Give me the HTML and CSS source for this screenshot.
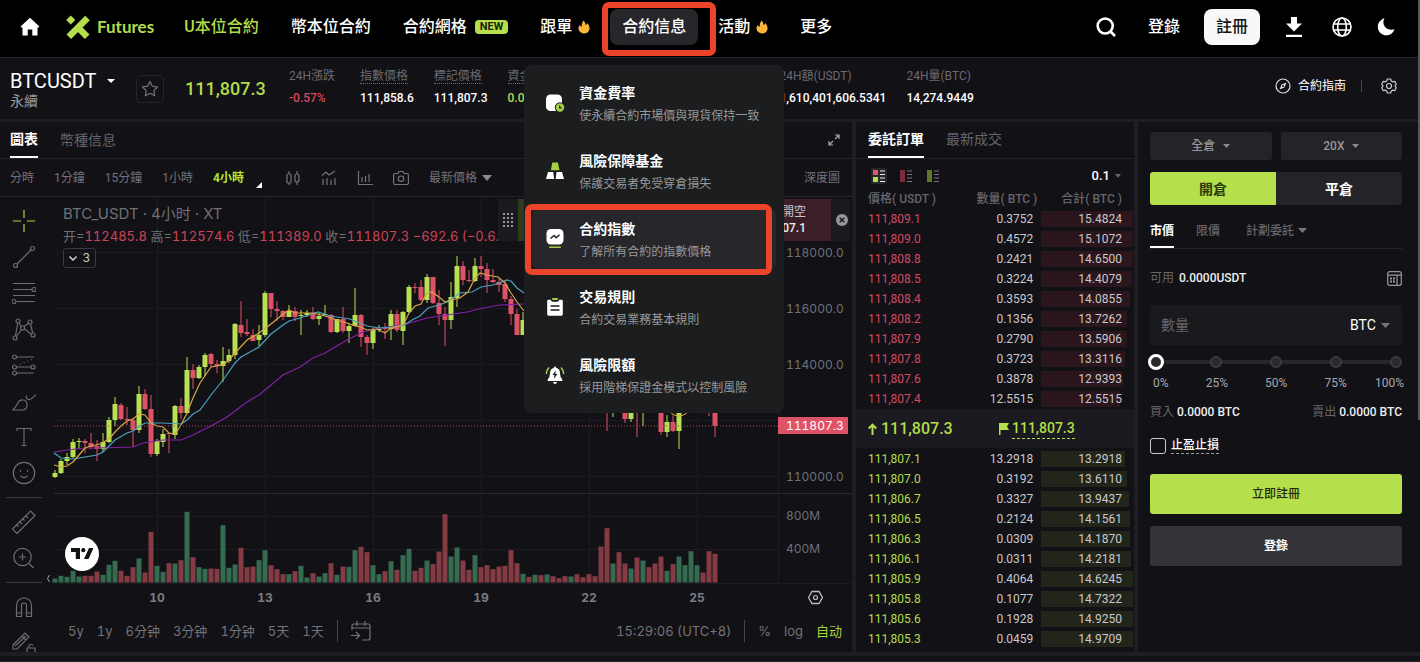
FILE: index.html
```html
<!DOCTYPE html>
<html lang="zh-Hant">
<head>
    <meta charset="UTF-8">
    <meta name="viewport" content="width=device-width, initial-scale=1.0">
    <title>BTCUSDT 永續 | Futures</title>
    <link rel="stylesheet" href="styles.css">
</head>
<body>

<header class="topbar">
    <a href="#" class="home" aria-label="Home">
        <svg width="20" height="20" viewBox="0 0 20 20"><path fill="#fff" d="M10 .8 19.4 9.400 18.600 10.500H17.500V18.500H12.300V12.500H7.700V18.500H2.500V10.500H1.400L.6 9.400Z"/></svg>
    </a>
    <a href="#" class="logo">
        <svg width="24" height="24" viewBox="0 0 24 24" fill="none" stroke="#b5e04c" stroke-width="6.500" stroke-linejoin="round"><path d="M21.500 3 2.800 21.700M2.500 2.800 7 7.300M11.500 12l9.700 9.700"/></svg>
        <span>Futures</span>
    </a>
    <nav>
        <a href="#" class="lime">U本位合約</a>
        <a href="#">幣本位合約</a>
        <a href="#">合約網格<span class="new">NEW</span></a>
        <a href="#">跟單<svg class="flame" width="12" height="14" viewBox="0 0 12 14"><path fill="#fbb53c" d="M5.500.5C6.800 2 7.600 3.200 7.500 5 8.500 4.700 9 4 9.200 3 11.500 5.500 12.300 8.500 10.800 11 9.500 13.200 7 13.600 5.500 13.400 2.500 13 .5 11 .5 8.500.5 7 1 5.800 1.800 5 2.200 6 2.800 6.700 3.600 7 3.600 4.500 4.200 2.300 5.500.5Z"/></svg></a>
        <div class="nav-item">
            <a href="#" class="current">合約信息</a>
            <div class="mark mark-nav"></div>
            <div class="menu">
                <a href="#">
                    <svg width="20" height="20" viewBox="0 0 20 20"><rect x="1" y="1.500" width="16" height="16.500" rx="4.500" fill="#fff"/><circle cx="15" cy="14.500" r="5.200" fill="#1b1d1f"/><circle cx="15" cy="14.500" r="4.200" fill="#a6cf45"/><path d="M14.700 12.500v2.300h2" stroke="#1b1d1f" stroke-width="1.200" fill="none"/></svg>
                    <span><b>資金費率</b><small>使永續合約市場價與現貨保持一致</small></span>
                </a>
                <a href="#">
                    <svg width="20" height="20" viewBox="0 0 20 20"><path fill="#a6cf45" d="M7.300 1.500h5.600l1.600 7.700H5.800Z"/><path fill="#fff" d="M3 11h5.200l1 7H1ZM11.500 11h5.500l2 7h-8.300Z"/></svg>
                    <span><b>風險保障基金</b><small>保護交易者免受穿倉損失</small></span>
                </a>
                <a href="#" class="on">
                    <svg width="20" height="20" viewBox="0 0 20 20"><rect x="1.500" y="0" width="17" height="15.500" rx="4.500" fill="#fff"/><path d="M5.500 9.500 9 6.500l2.200 2.200 3.300-3" stroke="#222" stroke-width="1.500" fill="none"/><rect x="4" y="17.500" width="12" height="1.500" rx=".7" fill="#a6cf45"/></svg>
                    <span><b>合約指數</b><small>了解所有合約的指數價格</small></span>
                    <i class="mark mark-menu"></i>
                </a>
                <a href="#">
                    <svg width="20" height="20" viewBox="0 0 20 20"><rect x="7" y="1" width="6" height="2" rx="1" fill="#a6cf45"/><path fill="#fff" d="M3.500 2.800h2.200q.6 2 2.300 2h4q1.700 0 2.300-2h2.200q1.300 0 1.300 1.300v13q0 1.700-1.500 1.700H3.700q-1.500 0-1.500-1.700v-13q0-1.300 1.300-1.300Z"/><path d="M5.500 9h9M5.500 13h9" stroke="#1b1d1f" stroke-width="1.500"/></svg>
                    <span><b>交易規則</b><small>合約交易業務基本規則</small></span>
                </a>
                <a href="#">
                    <svg width="20" height="20" viewBox="0 0 20 20"><path fill="#fff" d="M10 1.500q1 0 1 1.300 4 .8 4 5.500 0 4 2.300 6.200V16H2.700v-1.500Q5 12.300 5 8.300q0-4.700 4-5.500 0-1.300 1-1.300ZM8 17h4q-.3 2-2 2t-2-2Z"/><path fill="#1b1d1f" d="M10.800 5.500 7.500 10h2l-.6 4 3.500-5h-2Z"/><path d="M4 2.500Q1.500 5 1.300 9M16 2.500Q18.500 5 18.700 9" stroke="#a6cf45" stroke-width="1.600" fill="none"/></svg>
                    <span><b>風險限額</b><small>採用階梯保證金模式以控制風險</small></span>
                </a>
            </div>
        </div>
        <a href="#">活動<svg class="flame" width="12" height="14" viewBox="0 0 12 14"><path fill="#fbb53c" d="M5.500.5C6.800 2 7.600 3.200 7.500 5 8.500 4.700 9 4 9.200 3 11.500 5.500 12.300 8.500 10.800 11 9.500 13.200 7 13.600 5.500 13.400 2.500 13 .5 11 .5 8.500.5 7 1 5.800 1.800 5 2.200 6 2.800 6.700 3.600 7 3.600 4.500 4.200 2.300 5.500.5Z"/></svg></a>
        <a href="#">更多</a>
    </nav>
    <div class="account">
        <button class="icon" aria-label="Search"><svg width="20" height="20" viewBox="0 0 20 20" fill="none" stroke="#fff" stroke-width="2.600"><circle cx="9.200" cy="9" r="7.500"/><path d="m14.500 14.500 4.500 4.500"/></svg></button>
        <a href="#">登錄</a>
        <button class="signup">註冊</button>
        <button class="icon" aria-label="Download"><svg width="20" height="20" viewBox="0 0 20 20" fill="#fff"><path d="M7 0h6v6.500h5L10 14.500 2 6.500h5ZM2 17.700h16V20H2Z"/></svg></button>
        <button class="icon" aria-label="Language"><svg width="20" height="20" viewBox="0 0 20 20" fill="none" stroke="#fff" stroke-width="1.600"><circle cx="10" cy="10" r="9"/><ellipse cx="10" cy="10" rx="4.300" ry="9"/><path d="M1.500 7h17M1.500 13h17"/></svg></button>
        <button class="icon moon" aria-label="Dark mode"><svg width="20" height="20" viewBox="0 0 20 20"><path fill="#fff" d="M8.500 1.200C5 7 10 14.500 18.500 12.200 16.800 17 12.500 19 8.500 18.200-.3 16-.6 4 8.500 1.200Z"/></svg></button>
    </div>
</header>

<section class="ticker">
    <div class="pair">
        <h1>BTCUSDT<svg width="8" height="4" viewBox="0 0 8 4"><path fill="#fff" d="M0 0h8L4 4Z"/></svg></h1>
        <p>永續</p>
    </div>
    <button class="star" aria-label="Favorite"><svg width="18" height="18" viewBox="0 0 18 18" fill="none" stroke="#77767b" stroke-width="1.200" stroke-linejoin="round"><path d="m9 1.500 2.300 4.700 5.200.8-3.700 3.600.9 5.200L9 13.300l-4.700 2.500.9-5.200L1.500 7l5.200-.8Z"/></svg></button>
    <strong class="last">111,807.3</strong>
    <dl class="stats">
        <div class="change"><dt>24H漲跌</dt><dd class="red">-0.57%</dd></div>
        <div><dt><u>指數價格</u></dt><dd>111,858.6</dd></div>
        <div><dt><u>標記價格</u></dt><dd>111,807.3</dd></div>
        <div class="funding"><dt><u>資金費率</u></dt><dd class="lime">0.0100%</dd></div>
        <div><dt>24H額(USDT)</dt><dd>1,610,401,606.5341</dd></div>
        <div><dt>24H量(BTC)</dt><dd>14,274.9449</dd></div>
    </dl>
    <div class="guide">
        <a href="#"><svg width="16" height="16" viewBox="0 0 16 16" fill="none" stroke="#ddd" stroke-width="1.200"><circle cx="8" cy="8" r="7"/><path fill="#ddd" stroke="none" d="M11.500 4.500 9.400 9.400 4.500 11.500 6.600 6.600Z"/><circle cx="8" cy="8" r="1" fill="#121116" stroke="none"/></svg>合約指南</a>
        <span class="bar"></span>
        <button class="icon" aria-label="Settings"><svg width="16" height="16" viewBox="0 0 16 16" fill="none" stroke="#ccc" stroke-width="1.200" stroke-linejoin="round"><path d="M6.300 1h3.400l.6 2 1.300.8 2.100-.5 1.600 2.900L13.900 8l1.400 1.800-1.600 2.900-2.100-.5-1.300.8-.6 2H6.300l-.6-2-1.300-.8-2.100.5L.7 9.800 2.100 8 .7 6.200l1.600-2.900 2.100.5L5.700 3Z"/><circle cx="8" cy="8" r="2.500"/></svg></button>
    </div>
</section>

<main>
    <section class="chart-panel">
        <div class="tabs">
            <button class="on">圖表</button>
            <button>幣種信息</button>
            <button class="icon expand" aria-label="Fullscreen"><svg width="12" height="12" viewBox="0 0 12 12" fill="none" stroke="#a9a8ad" stroke-width="1.200"><path d="M7 1h4v4M11 1 7 5M5 11H1V7M1 11l4-4"/></svg></button>
        </div>
        <div class="toolbar">
            <button>分時</button>
            <button>1分鐘</button>
            <button>15分鐘</button>
            <button>1小時</button>
            <button class="period">4小時</button>
            <svg class="corner" width="6" height="6" viewBox="0 0 6 6"><path fill="#fff" d="M6 0v6H0Z"/></svg>
            <button class="icon" aria-label="Candles"><svg width="16" height="16" viewBox="0 0 16 16" fill="none" stroke="#74737a" stroke-width="1.200"><rect x="2" y="4" width="4" height="9" rx="1"/><path d="M4 1v3M4 13v2M12 1v3M12 12v3"/><rect x="10" y="4" width="4" height="8" rx="2"/></svg></button>
            <button class="icon" aria-label="Indicators"><svg width="16" height="16" viewBox="0 0 16 16" fill="none" stroke="#74737a" stroke-width="1.200"><path d="M1 5.500 5 2l3 3 6-4M2 9v6M6 8v7M10 10v5M14 8v7"/></svg></button>
            <button class="icon" aria-label="Bars"><svg width="16" height="16" viewBox="0 0 16 16" fill="none" stroke="#74737a" stroke-width="1.200"><path d="M1.500 1v13.500H16M5 7v5M8.500 6v6M12 4v8"/></svg></button>
            <button class="icon" aria-label="Screenshot"><svg width="16" height="16" viewBox="0 0 16 16" fill="none" stroke="#74737a" stroke-width="1.200"><path d="M5 3.500 6 1.500h4l1 2h3q1.400 0 1.400 1.500v8q0 1.500-1.400 1.500H2Q.6 14.500.6 13V5Q.6 3.500 2 3.500Z"/><circle cx="8" cy="8.700" r="2.700"/></svg></button>
            <button>最新價格<svg class="caret" width="10" height="6" viewBox="0 0 10 6"><path fill="#8a898e" d="M0 0h10L5 6Z"/></svg></button>
            <button class="depth">深度圖</button>
        </div>
        <div class="chart-body">
            <aside class="tools">
                <svg viewBox="0 0 24 24" class="lime-stroke"><path d="M12 1v8M12 15v8M1 12h8M15 12h8"/></svg>
                <svg viewBox="0 0 24 24"><circle cx="3.500" cy="20.500" r="2"/><circle cx="20.500" cy="3.500" r="2"/><path d="M5 19 19 5"/></svg>
                <svg viewBox="0 0 24 24"><path d="M1 2.500h22M1 8.500h19M1 14.500h22M5 20.500h18"/><circle cx="22" cy="8.500" r="2"/><circle cx="2" cy="20.500" r="2"/></svg>
                <svg viewBox="0 0 24 24"><circle cx="6" cy="4" r="2"/><circle cx="18" cy="5" r="2"/><circle cx="10.500" cy="11" r="2"/><circle cx="3" cy="21" r="2"/><circle cx="21" cy="18" r="2"/><path d="M7 6l2.500 3.500M16.500 6.500 12 9.500M12.500 12 19 17M9.500 12.500 4.500 19.500M5.700 6 3.500 19M18.500 7l2.200 9"/></svg>
                <svg viewBox="0 0 24 24"><circle cx="2.500" cy="4" r="2"/><circle cx="2.500" cy="14" r="2"/><circle cx="21" cy="14" r="2"/><circle cx="2.500" cy="20" r="2"/><path d="M4.500 4H22M4.500 14H19M4.500 20H22"/><path d="M8 11.500 21 6" stroke-dasharray="1 3"/></svg>
                <svg viewBox="0 0 24 24"><path d="M1 21h9q5 0 5-5t-4-5q-3.500-.5-5.500 3.500T1 21ZM14.500 6.500q-1 4 2.500 4.200Q19 10.500 25 4.500"/></svg>
                <svg viewBox="0 0 24 24"><path d="M5 6V3.500h14V6M12 3.500v17M9.500 20.500h5"/></svg>
                <svg viewBox="0 0 24 24"><circle cx="12" cy="12" r="10.700"/><path d="M8.500 15q3.500 3 7 0M8.500 9v2M15.500 9v2"/></svg>
                <hr>
                <svg viewBox="0 0 24 24"><path d="M.5 19 18.500 1l4.500 4.500L5 23.500ZM5 15l1.500 1.500M8 12l2 2M11 9l1.500 1.500M14 6l2 2"/></svg>
                <svg viewBox="0 0 24 24"><circle cx="10.500" cy="11" r="8.700"/><path d="m17 17.500 4.500 4.500M10.500 7.500v7M7 11h7"/></svg>
                <hr>
                <svg viewBox="0 0 24 24"><path d="M4.500 21.500V10.500a7.500 7.500 0 0 1 15 0v11h-5v-11q0-2.500-2.500-2.500T9.500 10.500v11ZM4.500 18h5M14.500 18h5"/></svg>
                <svg viewBox="0 0 24 24"><path d="M1 14 13 2l4 4L5 18H1ZM10 5l4 4M3 15 14 5M15 17h8v7h-8ZM17 17v-2.500q2.500-2.500 4 0"/></svg>
            </aside>
            <div class="plot">
                <div class="stage">
                    <svg id="chart" viewBox="54 197 798 415" preserveAspectRatio="xMaxYMin meet"></svg>
                    <div class="legend">
                        <p class="symbol">BTC_USDT · 4小时 · XT</p>
                        <p class="ohlc">开=<em>112485.8</em> 高=<em>112574.6</em> 低=<em>111389.0</em> 收=<em>111807.3</em> <em>−692.6 (−0.6.</em></p>
                        <button class="count"><svg width="8" height="5" viewBox="0 0 8 5" fill="none" stroke="#ddd" stroke-width="1.400"><path d="m.5.500 3.500 3.500L7.500.5"/></svg>3</button>
                    </div>
                    <div class="quick">
                        <svg width="10" height="16" viewBox="0 0 10 16" fill="#97969b"><path d="M0 1h2v2H0ZM4 1h2v2H4ZM8 1h2v2H8ZM0 5h2v2H0ZM4 5h2v2H4ZM8 5h2v2H8ZM0 9h2v2H0ZM4 9h2v2H4ZM8 9h2v2H8ZM0 13h2v2H0ZM4 13h2v2H4ZM8 13h2v2H8Z"/></svg>
                        <button class="long" aria-label="開多"></button>
                        <button class="short">開空<b>111,807.1</b></button>
                        <button class="icon" aria-label="Close"><svg width="12" height="12" viewBox="0 0 12 12"><circle cx="6" cy="6" r="6" fill="#98979c"/><path d="m3.700 3.700 4.600 4.600M8.300 3.700 3.700 8.300" stroke="#1b1a20" stroke-width="1.500"/></svg></button>
                    </div>
                    <a href="#" class="tv" aria-label="TradingView"><svg width="22" height="12" viewBox="0 0 22 12"><path fill="#111" d="M0 0h9v11H4.800V4H0ZM18 0h4.500L17.500 11H13Z"/><circle cx="12.300" cy="2.200" r="2.100" fill="#111"/></svg></a>
                </div>
                <div class="ranges">
                    <button>5y</button><button>1y</button><button>6分钟</button><button>3分钟</button><button>1分钟</button><button>5天</button><button>1天</button>
                    <span class="bar"></span>
                    <button class="icon" aria-label="Go to date"><svg width="20" height="20" viewBox="0 0 20 20" fill="none" stroke="#74737a" stroke-width="1.200"><path d="M1 9V5q0-2 2-2h14q2 0 2 2v12q0 2-2 2h-6M1 7h18M6 0v5M14 0v5M0 14.500h8M5 11l3.500 3.500L5 18"/></svg></button>
                    <span class="clock">15:29:06 (UTC+8)</span>
                    <span class="bar"></span>
                    <button>%</button><button>log</button><button class="lime">自动</button>
                </div>
            </div>
        </div>
    </section>

    <section class="book">
        <div class="tabs">
            <button class="on">委託訂單</button>
            <button>最新成交</button>
        </div>
        <div class="book-tools">
            <button class="icon on" aria-label="All"><svg width="12" height="12" viewBox="0 0 12 12"><path fill="#e0566c" d="M0 0h5v5H0Z"/><path fill="#b5e04c" d="M0 7h5v5H0Z"/><path d="M7 1h5M7 4.500h5M7 8h5M7 11.500h5" stroke="#eee"/></svg></button>
            <button class="icon" aria-label="Asks"><svg width="12" height="12" viewBox="0 0 12 12"><path fill="#7a2e3c" d="M0 0h5v12H0Z"/><path d="M7 1h5M7 4.500h5M7 8h5M7 11.500h5" stroke="#77767b"/></svg></button>
            <button class="icon" aria-label="Bids"><svg width="12" height="12" viewBox="0 0 12 12"><path fill="#5f762b" d="M0 0h5v12H0Z"/><path d="M7 1h5M7 4.500h5M7 8h5M7 11.500h5" stroke="#77767b"/></svg></button>
            <button class="step">0.1<svg width="6" height="4" viewBox="0 0 6 4"><path fill="#66656a" d="M0 0h6L3 4Z"/></svg></button>
        </div>
        <table>
            <thead><tr><th>價格( USDT )</th><th>數量( BTC )</th><th>合計( BTC )</th></tr></thead>
            <tbody id="asks" class="asks"></tbody>
        </table>
        <div class="mid">
            <strong><svg width="9" height="12" viewBox="0 0 9 12" fill="none" stroke="#b5e04c" stroke-width="2"><path d="M4.500 12V1.500M.7 5.500 4.500 1.700l3.800 3.800"/></svg>111,807.3</strong>
            <a href="#"><svg width="10" height="12" viewBox="0 0 10 12"><path fill="#b5e04c" d="M0 0h10L8 3.500 10 7H1.500v5H0Z"/></svg><span>111,807.3</span></a>
        </div>
        <table>
            <tbody id="bids" class="bids"></tbody>
        </table>
    </section>

    <section class="trade">
        <div class="picks">
            <div class="pick"><select aria-label="Margin mode"><option>全倉</option></select><svg width="7" height="4" viewBox="0 0 7 4"><path fill="#8a898e" d="M0 0h7L3.500 4Z"/></svg></div>
            <div class="pick"><select aria-label="Leverage"><option>20X</option></select><svg width="7" height="4" viewBox="0 0 7 4"><path fill="#8a898e" d="M0 0h7L3.500 4Z"/></svg></div>
        </div>
        <div class="sides"><button class="on">開倉</button><button>平倉</button></div>
        <div class="types">
            <button class="on">市價</button>
            <button>限價</button>
            <button>計劃委託<svg width="9" height="5" viewBox="0 0 9 5"><path fill="#77767b" d="M0 0h9L4.500 5Z"/></svg></button>
        </div>
        <div class="avail">
            <span>可用</span><b>0.0000USDT</b>
            <button class="icon" aria-label="Calculator"><svg width="15" height="15" viewBox="0 0 15 15" fill="none" stroke="#98979c" stroke-width="1.200"><rect x=".7" y=".7" width="13.600" height="13.600" rx="2"/><path d="M1 4.200h13M10 4.500V14"/><path d="M3 7.500h2M6 7.500h2M3 10.500h2M6 10.500h2" stroke-width="1.800"/></svg></button>
        </div>
        <div class="amount">
            <input type="text" placeholder="數量" aria-label="數量">
            <select aria-label="Unit"><option>BTC</option></select>
            <svg width="9" height="5" viewBox="0 0 9 5"><path fill="#77767b" d="M0 0h9L4.500 5Z"/></svg>
        </div>
        <div class="slider">
            <div class="stops"><i></i><i></i><i></i><i></i><i></i></div>
            <input type="range" min="0" max="100" value="0" aria-label="Percent">
        </div>
        <div class="percents"><span>0%</span><span>25%</span><span>50%</span><span>75%</span><span>100%</span></div>
        <div class="totals">
            <p>買入 <b>0.0000 BTC</b></p>
            <p>賣出 <b>0.0000 BTC</b></p>
        </div>
        <div class="tpsl">
            <input type="checkbox" id="tpsl">
            <label for="tpsl">止盈止損</label>
        </div>
        <button class="cta">立即註冊</button>
        <button class="cta plain">登錄</button>
    </section>
</main>
<footer></footer>
<div class="scrollbar"></div>

<script src="script.js"></script>
</body>
</html>
```
FILE: styles.css
```css
* {
    box-sizing: border-box;
}

body {
    margin: 0;
    background: #121116;
    color: #fff;
    font-family: Roboto, "Noto Sans CJK TC", sans-serif;
    font-size: 12px;
    line-height: 16px;
    overflow: hidden;
}

a {
    color: inherit;
    text-decoration: none;
}

button, input, select {
    font: inherit;
    color: inherit;
    background: none;
    border: 0;
    padding: 0;
    margin: 0;
}

select {
    appearance: none;
}

h1, p, dl, dd {
    margin: 0;
}

svg {
    display: block;
    flex: none;
}

.icon {
    display: flex;
}

.lime {
    color: #b2dc4a;
}

.red {
    color: #d9475f;
}

/* top navigation */
.topbar {
    display: flex;
    align-items: center;
    height: 58px;
    padding: 0 24px 3px 20px;
    background: #000;
    border-bottom: 1px solid #232228;
    font-size: 16px;
    font-weight: 500;
}

.logo {
    display: flex;
    align-items: center;
    gap: 7px;
    margin: 0 30px 0 26px;
    color: #b2dc4a;
    font-family: Lato, sans-serif;
    font-size: 17px;
    font-weight: 700;
}

nav {
    display: flex;
    align-items: center;
    gap: 32px;
}

nav > a {
    display: flex;
    align-items: center;
    white-space: nowrap;
}

.new {
    margin-left: 8px;
    padding: 0 5px;
    border-radius: 4px;
    background: #b5e04c;
    color: #1b2208;
    font-size: 11px;
    font-weight: 700;
    line-height: 14px;
}

.flame {
    margin-left: 6px;
}

.nav-item {
    position: relative;
    margin: 0 -12px;
}

.current {
    display: block;
    padding: 10px 12px;
    border-radius: 8px;
    background: #26262b;
    white-space: nowrap;
}

.mark {
    position: absolute;
    border: 6px solid #ec432b;
    border-radius: 7px;
    z-index: 3;
    pointer-events: none;
}

.mark-nav {
    inset: -7px -18px -11px -8px;
}

.mark-menu {
    inset: -5px 4px -6px -7px;
}

.menu {
    position: absolute;
    top: 100%;
    left: 50%;
    z-index: 2;
    display: flex;
    flex-direction: column;
    gap: 8px;
    width: 260px;
    margin-top: 20px;
    padding: 8px;
    border-radius: 8px;
    background: #1b1d1f;
    transform: translateX(-50%);
}

.menu a {
    position: relative;
    display: flex;
    align-items: center;
    gap: 14px;
    height: 60px;
    padding: 0 14px 0 13px;
    border-radius: 6px;
}

.menu a.on {
    background: #26262b;
}

.menu span {
    padding-top: 4px;
}

.menu b,
.menu small {
    display: block;
    white-space: nowrap;
}

.menu b {
    font-size: 14px;
    line-height: 22px;
}

.menu small {
    color: #97989a;
    font-size: 12px;
    font-weight: 400;
    line-height: 24px;
}

.account {
    display: flex;
    align-items: center;
    gap: 28px;
    margin-left: auto;
}

.account a {
    margin: 0 -4px 0 4px;
}

.signup {
    height: 36px;
    padding: 0 12px;
    border-radius: 8px;
    background: #f8f8f8;
    color: #111;
}

.signup + .icon {
    margin-left: -4px;
}

.moon {
    margin-left: -4px;
}

/* ticker */
.ticker {
    display: flex;
    align-items: center;
    height: 64px;
    padding: 0 23px 0 10px;
    border-bottom: 3px solid #1e1d23;
    white-space: nowrap;
}

.pair {
    width: 126px;
}

.pair h1 {
    display: flex;
    align-items: center;
    gap: 10px;
    font-size: 20px;
    font-weight: 400;
    line-height: 24px;
}

.pair p {
    color: #9a999e;
    font-size: 14px;
}

.star {
    display: grid;
    place-items: center;
    width: 28px;
    height: 28px;
    border: 1px solid #25242a;
    border-radius: 5px;
}

.last {
    width: 82px;
    margin: 0 22px 0 21px;
    color: #b2dc4a;
    font-size: 18px;
    font-weight: 500;
}

.stats {
    display: flex;
    gap: 20px;
    margin-bottom: 3px;
}

.stats .change {
    width: 51px;
}

.stats .funding {
    width: 252px;
}

dt {
    height: 22px;
    color: #6b6a70;
}

dt u {
    text-decoration: none;
    border-bottom: 1px dotted #6b6a70;
}

dd {
    font-weight: 500;
}

.guide {
    display: flex;
    align-items: center;
    gap: 15px;
    margin: 0 0 6px auto;
}

.guide a {
    display: flex;
    gap: 7px;
}

.bar {
    width: 1px;
    height: 12px;
    background: #45444a;
}

.guide .icon {
    margin-left: 4px;
}

/* panels */
main {
    display: flex;
    gap: 4px;
    background: #1e1d23;
    border-bottom: 4px solid #1e1d23;
}

main > section {
    background: #121116;
}

.chart-panel {
    flex: 1;
    min-width: 0;
}

.tabs {
    display: flex;
    gap: 22px;
    height: 37px;
    padding: 0 12px 0 10px;
    border-bottom: 1px solid #25242a;
}

.tabs button {
    color: #66656b;
    font-size: 14px;
}

.tabs .on {
    border-bottom: 2px solid #fff;
    color: #fff;
    font-weight: 700;
}

.tabs .expand {
    align-items: center;
    margin-left: auto;
}

.toolbar {
    display: flex;
    align-items: center;
    gap: 20px;
    height: 38px;
    padding: 0 12px 0 10px;
    border-bottom: 1px solid #25242a;
    color: #74737a;
}

.toolbar button {
    display: flex;
    align-items: center;
    gap: 5px;
}

.toolbar .period {
    color: #b4e62e;
    font-weight: 700;
}

.corner {
    align-self: flex-end;
    margin: 0 3px 8px -8px;
}

.toolbar .depth {
    margin-left: auto;
}

.chart-body {
    display: flex;
    height: 455px;
}

.tools {
    display: flex;
    flex-direction: column;
    align-items: center;
    gap: 12px;
    width: 54px;
    padding: 12px 6px 0 0;
    overflow: hidden;
}

.tools svg {
    width: 24px;
    height: 24px;
    fill: none;
    stroke: #6e6d73;
    stroke-width: 1.2;
}

.tools .lime-stroke {
    stroke: #a9d33e;
}

.tools hr {
    width: 36px;
    margin: 0;
    border: 0;
    border-top: 1px solid #3a393f;
}

.plot {
    flex: 1;
    min-width: 0;
    font-family: Inter, "Noto Sans CJK SC", sans-serif;
    font-variant-numeric: tabular-nums;
}

.stage {
    position: relative;
    height: 415px;
}

#chart {
    width: 100%;
    height: 415px;
    overflow: visible;
}

#chart text {
    fill: #707076;
    font-size: 12px;
}

#chart .day {
    font-weight: 700;
    text-anchor: middle;
    fill: #7c7b81;
}

#chart .tag {
    fill: #fff;
}

.legend {
    position: absolute;
    top: 6px;
    left: 9px;
    color: #707076;
    white-space: nowrap;
}

.symbol {
    font-size: 15px;
    line-height: 22px;
}

.ohlc {
    font-size: 13px;
    line-height: 22px;
}

.ohlc em {
    color: #cc4459;
    font-style: normal;
}

.count {
    display: flex;
    align-items: center;
    justify-content: center;
    gap: 6px;
    width: 33px;
    height: 20px;
    margin-top: 1px;
    border: 1px solid #3a393f;
    border-radius: 3px;
    color: #ccc;
}

.quick {
    position: absolute;
    top: 2px;
    right: 2px;
    display: flex;
    align-items: center;
    gap: 5px;
    width: 352px;
    height: 42px;
    padding: 0 2px 0 5px;
    background: #1b1a20;
    font-family: Roboto, "Noto Sans CJK TC", sans-serif;
}

.quick .long,
.quick .short {
    flex: 1;
    height: 42px;
    background: #2c3c1e;
}

.quick .short {
    margin-left: -5px;
    padding-right: 25px;
    background: #3a1f28;
    color: #c9c3c5;
    text-align: right;
}

.quick b {
    display: block;
    color: #eee;
    font-weight: 500;
}

.tv {
    position: absolute;
    left: 11px;
    bottom: 41px;
    display: grid;
    place-items: center;
    width: 34px;
    height: 34px;
    border-radius: 50%;
    background: #fff;
}

.ranges {
    display: flex;
    align-items: center;
    gap: 13px;
    height: 38px;
    padding: 0 10px 0 14px;
    color: #74737a;
    font-size: 13px;
    white-space: nowrap;
}

.ranges .bar {
    height: 22px;
}

.clock {
    margin-left: auto;
}

.ranges .lime {
    color: #a9d33e;
}

/* order book */
.book {
    width: 278px;
    overflow: hidden;
}

.book .tabs {
    padding-left: 12px;
}

.book .tabs button {
    padding-bottom: 2px;
}

.book .tabs .on {
    padding-bottom: 0;
}

.book-tools {
    display: flex;
    align-items: center;
    gap: 12px;
    height: 30px;
    padding: 4px 13px 0 15px;
}

.book-tools .icon {
    padding: 2px;
    margin-right: -1px;
}

.book-tools .on {
    background: #26262b;
    border-radius: 2px;
}

.step {
    display: flex;
    align-items: center;
    gap: 5px;
    margin-left: auto;
    font-size: 13px;
    font-weight: 500;
}

table {
    width: 100%;
    border-collapse: collapse;
    table-layout: fixed;
}

th, td {
    width: 92px;
    height: 20px;
    padding: 0 12px 0 0;
    text-align: right;
    font-weight: 400;
    line-height: 20px;
    white-space: nowrap;
}

th {
    color: #66656b;
    font-weight: 500;
}

th:nth-child(2) {
    padding-right: 4px;
}

td:nth-child(2) {
    padding-right: 8px;
}

th:first-child,
td:first-child {
    padding: 0 0 0 12px;
    text-align: left;
}

td {
    color: #c9c8cd;
    background-position: left center;
    background-repeat: no-repeat;
}

.asks td:first-child {
    color: #d9475f;
}

.bids td:first-child {
    color: #b2dc4a;
}

.asks td:last-child {
    background-image: linear-gradient(#2a161c, #2a161c);
}

.bids td:last-child {
    background-image: linear-gradient(#22261a, #22261a);
}

.mid {
    display: flex;
    align-items: center;
    height: 39px;
    margin-bottom: 1px;
    padding-left: 12px;
    background: #1b1a20;
    color: #b2dc4a;
}

.mid strong,
.mid a {
    display: flex;
    align-items: center;
    gap: 4px;
    font-size: 16px;
    font-weight: 500;
}

.mid strong {
    width: 131px;
}

.mid a {
    gap: 3px;
    font-size: 14px;
}

.mid a span {
    border-bottom: 1px dashed #b2dc4a;
    line-height: 19px;
}

/* order form */
.trade {
    width: 282px;
    padding: 10px 18px 0 12px;
}

.picks {
    display: flex;
    gap: 9px;
}

.pick {
    display: flex;
    flex: 1;
    align-items: center;
    justify-content: center;
    gap: 7px;
    height: 28px;
    border-radius: 3px;
    background: #242328;
    color: #98979c;
    font-weight: 500;
}

.sides {
    display: flex;
    margin-top: 12px;
    border-radius: 3px;
    overflow: hidden;
}

.sides button {
    flex: 1;
    height: 33px;
    background: #242328;
    font-size: 14px;
    font-weight: 700;
}

.sides .on {
    background: #b5e04c;
    color: #2c3a0c;
}

.types {
    display: flex;
    gap: 22px;
    height: 34px;
    margin-top: 10px;
    border-bottom: 1px solid #25242a;
}

.types button {
    display: flex;
    align-items: center;
    gap: 4px;
    border-bottom: 2px solid transparent;
    color: #66656b;
    font-weight: 500;
}

.types button:last-child {
    margin-left: 4px;
}

.types .on {
    border-color: #fff;
    color: #fff;
    font-weight: 700;
}

.avail {
    display: flex;
    align-items: center;
    gap: 5px;
    height: 16px;
    margin-top: 21px;
    color: #66656b;
}

.avail b,
.totals b {
    color: #eee;
    font-weight: 500;
}

.avail .icon {
    margin-left: auto;
}

.amount {
    display: flex;
    align-items: center;
    gap: 5px;
    height: 40px;
    margin-top: 19px;
    padding: 0 12px 0 11px;
    border-radius: 3px;
    background: #1a191e;
    font-size: 14px;
}

.amount input {
    flex: 1;
    min-width: 0;
}

.amount input::placeholder {
    color: #66656b;
}

.slider {
    position: relative;
    height: 16px;
    margin: 9px -2px 0;
}

.stops {
    position: absolute;
    inset: 2px;
    display: flex;
    justify-content: space-between;
    background: linear-gradient(#26252b, #26252b) center / 240px 4px no-repeat;
}

.stops i {
    width: 12px;
    height: 12px;
    border: 2px solid #3b3b3f;
    border-radius: 50%;
    background: #2a2a2c;
}

.slider input {
    position: relative;
    display: block;
    width: 100%;
    height: 16px;
    appearance: none;
}

.slider input::-webkit-slider-thumb {
    appearance: none;
    width: 16px;
    height: 16px;
    border: 3px solid #fff;
    border-radius: 50%;
    background: #2a2a2c;
}

.percents,
.totals {
    display: flex;
    justify-content: space-between;
}

.percents {
    margin: 5px -2px 0 3px;
    color: #a9a8ad;
}

.percents span:last-child {
    margin-left: -9px;
}

.totals {
    margin-top: 13px;
    color: #66656b;
}

.tpsl {
    display: flex;
    align-items: center;
    gap: 5px;
    margin-top: 17px;
}

.tpsl input {
    appearance: none;
    width: 16px;
    height: 16px;
    border: 1px solid #c9c8cd;
    border-radius: 3px;
}

.tpsl label {
    border-bottom: 1px dashed #98979c;
    font-weight: 500;
}

.cta {
    display: block;
    width: 100%;
    height: 40px;
    margin-top: 12px;
    border-radius: 3px;
    background: #b5e04c;
    color: #20290c;
    font-weight: 500;
}

.tpsl + .cta {
    margin-top: 20px;
}

.cta.plain {
    background: #343438;
    color: #fff;
    font-weight: 700;
}

footer {
    margin-top: 5px;
    border-top: 2px solid #232228;
}

.scrollbar {
    position: fixed;
    top: 0;
    right: 0;
    width: 2px;
    height: 420px;
    background: #57565b;
}
```
FILE: script.js
```js
var GREEN = '#b8e053', RED = '#de5268';
var chart = document.getElementById('chart');

// body top, body bottom, high, low, up
var candles = [
    [473,477,470,478,1],[461,473,459,474,1],[457,461,453,465,1],[442,457,439,458,1],[441,442,438,449,1],
    [441,443,439,453,0],[443,447,433,449,0],[446,449,440,461,0],[442,449,433,452,1],[420,442,417,443,1],
    [404,420,397,426,1],[405,419,403,420,0],[419,420,407,425,0],[420,430,418,447,0],[394,430,386,433,1],
    [394,409,389,410,0],[409,454,395,457,0],[441,454,439,456,1],[434,442,429,447,1],[433,434,433,453,0],
    [406,435,405,439,1],[406,413,398,419,0],[370,413,357,414,1],[370,378,364,389,0],[367,378,365,379,1],
    [355,367,353,376,1],[354,364,353,367,0],[364,366,360,373,0],[361,366,347,382,1],[355,361,349,363,1],
    [324,355,323,359,1],[325,333,301,337,0],[332,334,319,336,0],[335,341,329,341,0],[335,340,325,346,1],
    [293,335,291,337,1],[293,309,293,317,0],[309,311,301,321,0],[311,317,310,320,0],[311,317,305,317,1],
    [311,317,307,321,0],[315,316,310,335,1],[313,315,310,317,1],[313,319,307,320,0],[316,319,313,325,1],
    [314,315,305,316,1],[315,332,314,333,0],[319,332,319,333,1],[319,331,307,333,0],[326,331,323,343,1],
    [315,326,288,326,1],[315,337,314,347,0],[337,343,335,355,0],[330,343,328,349,1],[329,330,325,332,1],
    [328,329,323,339,0],[314,329,310,340,1],[314,330,310,332,0],[312,331,311,345,1],[287,312,285,313,1],
    [287,288,283,293,0],[287,300,280,301,0],[277,300,274,303,1],[277,303,277,304,0],[303,314,290,325,0],
    [314,320,307,346,0],[297,320,282,329,1],[266,298,256,307,1],[266,280,261,285,0],[280,281,270,282,0],
    [266,281,258,282,1],[266,269,256,277,0],[269,280,263,293,0],[280,282,269,283,0],[282,285,279,292,0],
    [284,299,280,302,0],[299,314,296,325,0],[314,335,309,335,0],[320,335,312,335,1]
];
var recent = [
    [400,410,398,431,0],[398,408,396,417,1],[400,408,395,410,0],[405,419,400,423,0],[405,419,402,422,1],
    [400,410,398,437,0],[398,408,396,426,1],[398,409,396,411,0],[396,408,394,410,1],[405,432,400,435,0],
    [422,432,415,437,1],[422,431,415,432,0],[405,431,400,449,1],[396,406,394,408,1],[394,404,392,406,1],
    [394,404,392,406,1],[396,406,394,408,0],[398,410,396,416,0],[408,426,405,437,0]
];

// traded volume, negative when the candle closed lower
var volumes = [
    12,20,17,35,18,-20,-20,-33,23,53,65,-35,-20,-46,72,-30,-152,50,32,-58,57,-67,212,-76,46,41,-42,-41,172,44,
    54,-104,-46,-48,67,97,-52,-40,-25,25,-34,50,15,-28,18,28,-58,23,-48,47,97,-107,-91,52,25,-34,64,-38,82,101,
    -35,-44,66,-55,-93,-205,78,105,-66,-38,82,-46,-52,-40,-48,-50,-97,-58,26,-17,23,-22,24,-19,-13,-19,18,-25,
    -16,-25,-19,-108,-163,57,-91,-57,42,-75,66,-46,-57,-78,35,-55,78,52,94,52,-30,-94,-86
];

var averages = {
    '#8420a8': '54,452 67,450 85,448 97,448 133,447 143,443 163,440 181,440 193,435 211,426 227,417 247,402 259,395 283,375 300,367 313,358 325,353 347,340 363,332 380,328 403,325 427,318 447,315 467,312 483,308 500,305 524,304',
    '#4da3bd': '54,453 61,458 73,459 85,457 97,455 103,452 109,446 115,440 127,433 133,431 140,426 145,423 163,423 181,424 187,420 193,414 200,410 211,395 223,380 235,363 241,357 259,347 271,334 283,325 289,321 300,318 318,312 330,316 350,319 367,326 379,328 393,327 403,326 412,320 420,316 428,308 439,305 447,302 460,293 472,292 481,287 493,285 507,280 511,281 517,288 524,293',
    '#d8a642': '54,465 61,467 67,466 73,462 79,455 85,448 91,446 100,444 109,439 115,432 121,426 127,421 133,419 139,414 145,415 151,423 157,426 163,427 169,433 175,434 181,425 187,413 193,398 200,383 211,367 223,365 229,360 235,353 247,340 259,333 271,324 283,314 289,310 295,313 313,313 325,316 337,320 347,323 355,326 361,327 367,330 377,329 385,333 391,328 403,325 409,313 415,306 421,304 427,293 432,292 439,297 445,302 451,300 460,298 468,292 475,278 480,273 487,275 498,277 505,283 511,293 517,302 524,311'
};

function rect(x, y, w, h, fill) {
    return '<rect x="' + x + '" y="' + y + '" width="' + w + '" height="' + h + '" fill="' + fill + '"/>';
}

function text(x, y, value, cls) {
    return '<text x="' + x + '" y="' + y + '" class="' + (cls || '') + '">' + value + '</text>';
}

function drawCandle(c, x) {
    var color = c[4] ? GREEN : RED;
    return '<g fill="' + color + '">' +
        '<rect x="' + (x - 0.5) + '" y="' + c[2] + '" width="1" height="' + (c[3] - c[2]) + '"/>' +
        '<rect x="' + (x - 2.5) + '" y="' + c[0] + '" width="5" height="' + (c[1] - c[0]) + '"/></g>';
}

function drawChart() {
    var out = '';

    // grid
    [157, 265, 373, 481, 589, 697, 778].forEach(function(x) {
        out += rect(x, 197, 1, 386, '#1c1b21');
    });
    [252, 308, 364, 420, 476, 516, 549].forEach(function(y) {
        out += rect(54, y, 724, 1, '#1c1b21');
    });
    out += rect(54, 493, 798, 1, '#2b2a30');
    out += rect(54, 583, 798, 1, '#1c1b21');

    volumes.forEach(function(v, i) {
        var h = Math.abs(v) / 3;
        out += rect(52.5 + 6 * i, 582.5 - h, 5, h, v > 0 ? '#356b50' : '#843b43');
    });
    candles.forEach(function(c, i) {
        out += drawCandle(c, 55 + 6 * i);
    });
    recent.forEach(function(c, i) {
        out += drawCandle(c, 607 + 6 * i);
    });
    for (var color in averages) {
        out += '<polyline fill="none" stroke="' + color + '" stroke-width="1.200" points="' + averages[color] + '"/>';
    }
    out += '<path d="M671 413q8 6 16 0" fill="none" stroke="#d8a642"/>';

    // last price
    out += '<path d="M54 426H778" stroke="#b0475a" stroke-dasharray="1 2"/>';
    out += text(786, 257, '118000.0') + text(786, 313, '116000.0') + text(786, 369, '114000.0') + text(786, 481, '110000.0');
    out += text(786, 520, '800M') + text(786, 553, '400M');
    out += rect(778, 417, 70, 17, '#de5268') + text(786, 430, '111807.3', 'tag');

    [10, 13, 16, 19, 22, 25].forEach(function(day, i) {
        out += text(157 + 108 * i, 602, day, 'day');
    });
    out += '<path d="M808.500 597.500l3.500-6h7l3.500 6-3.500 6h-7Z" fill="none" stroke="#bbb" stroke-width="1.300"/>';
    out += '<circle cx="815.500" cy="597.500" r="2" fill="none" stroke="#bbb" stroke-width="1.200"/>';
    out += '<path d="M49.500 575l-2 3.500 2 3.500" fill="none" stroke="#aaa"/>';
    chart.innerHTML = out;
}

function fillBook(id, rows) {
    document.getElementById(id).innerHTML = rows.map(function(r) {
        // depth bar, one BTC is 6.3px wide
        var width = Math.min(92, Math.round(r[2] * 6.3));
        return '<tr><td>' + r[0] + '</td><td>' + r[1] + '</td><td style="background-size: ' + width + 'px 16px">' + r[2] + '</td></tr>';
    }).join('');
}

drawChart();
fillBook('asks', [
    ['111,809.1', '0.3752', '15.4824'], ['111,809.0', '0.4572', '15.1072'], ['111,808.8', '0.2421', '14.6500'],
    ['111,808.5', '0.3224', '14.4079'], ['111,808.4', '0.3593', '14.0855'], ['111,808.2', '0.1356', '13.7262'],
    ['111,807.9', '0.2790', '13.5906'], ['111,807.8', '0.3723', '13.3116'], ['111,807.6', '0.3878', '12.9393'],
    ['111,807.4', '12.5515', '12.5515']
]);
fillBook('bids', [
    ['111,807.1', '13.2918', '13.2918'], ['111,807.0', '0.3192', '13.6110'], ['111,806.7', '0.3327', '13.9437'],
    ['111,806.5', '0.2124', '14.1561'], ['111,806.3', '0.0309', '14.1870'], ['111,806.1', '0.0311', '14.2181'],
    ['111,805.9', '0.4064', '14.6245'], ['111,805.8', '0.1077', '14.7322'], ['111,805.6', '0.1928', '14.9250'],
    ['111,805.3', '0.0459', '14.9709']
]);
```
